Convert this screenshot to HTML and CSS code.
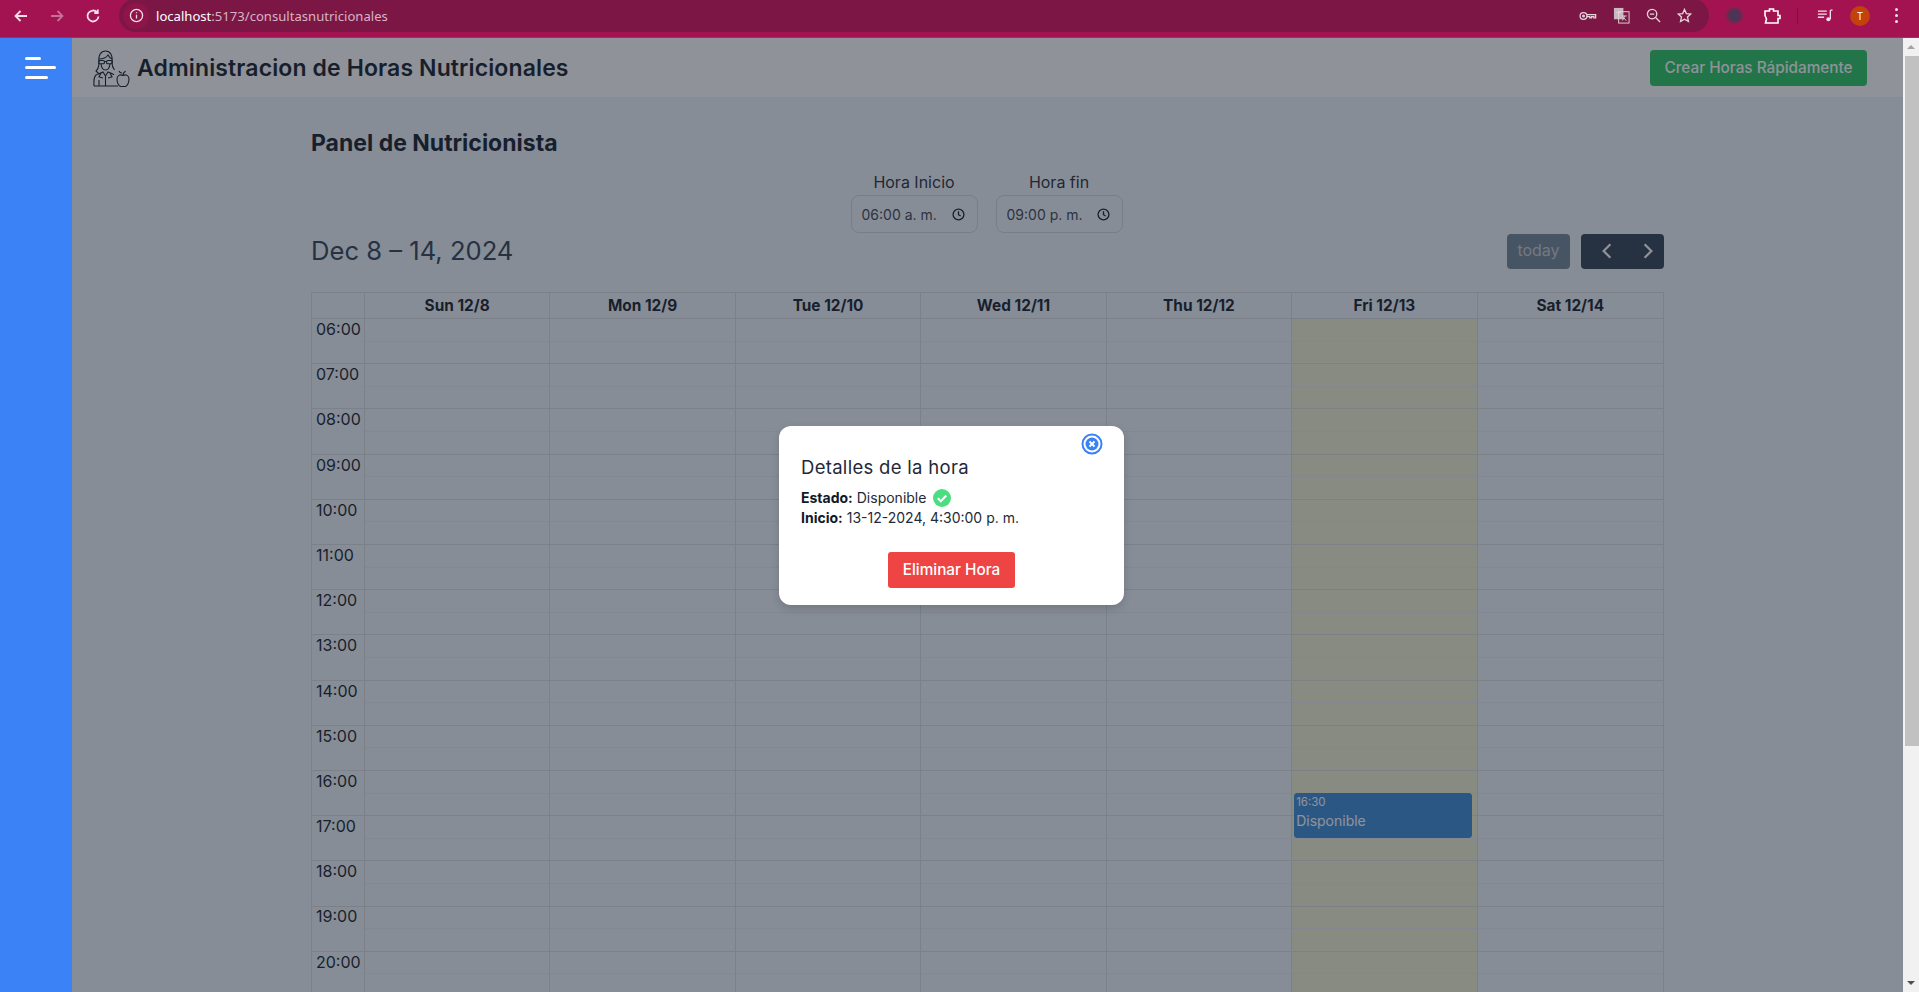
FILE: index.html
```html
<!DOCTYPE html>
<html lang="es">
  <head>
    <meta charset="utf-8" />
    <meta name="viewport" content="width=device-width, initial-scale=1" />
    <title>Administracion de Horas Nutricionales</title>
    <link rel="stylesheet" href="styles.css">
  </head>
  <body>
    <!-- barra del navegador -->
    <div class="browserbar">
      <svg class="navicon" viewBox="0 0 16 16"><path d="M14 8H3M7.5 3L2.5 8l5 5" /></svg>
      <svg class="navicon dim" viewBox="0 0 16 16"><path d="M2 8h11M8.5 3l5 5-5 5" /></svg>
      <svg class="navicon" viewBox="0 0 16 16"><path d="M13.5 8.5A5.5 5.5 0 1 1 12 4.2M12.8 1.5V5H9.300" /></svg>
      <div class="omnibox">
        <span class="infochip">
          <svg viewBox="0 0 16 16"><circle cx="8" cy="8" r="6.5" /><path d="M8 7.2v4M8 4.4v1.300" /></svg>
        </span>
        <span class="url"><b>localhost</b>:5173/consultasnutricionales</span>
        <span class="omniicons">
          <svg class="keyicon" viewBox="0 0 20 14"><circle cx="5" cy="7" r="3.8" /><circle cx="5" cy="7" r="1" /><path d="M8.8 5.5h9.700V9h-2V7.800h-2.500V9h-2V7.800H8.800" /></svg>
          <svg class="transicon" viewBox="0 0 18 18"><rect class="fillgray" x="1" y="1" width="10" height="12" /><rect x="6" y="5" width="11" height="12" /><path d="M3.5 6h5M6 4v2M9.5 9.500h5M12 9.500c0 3-2 4.500-2.500 5M11 11l3 3.500" /></svg>
          <svg viewBox="0 0 16 16"><circle cx="6.5" cy="6.5" r="5" /><path d="M10.2 10.200L15 15M4.2 6.500h4.600" /></svg>
          <svg viewBox="0 0 16 16"><path d="M8 1.5l2 4.400 4.700.5-3.500 3.200 1 4.700L8 11.900l-4.200 2.400 1-4.700L1.300 6.400 6 5.900z" /></svg>
        </span>
      </div>
      <div class="baricons">
        <span class="extdot"></span>
        <svg class="puzzle" viewBox="0 0 18 18"><path d="M2 4h4.500V2h4v2H15v4.500h2v3h-2V16H2.500l1-4-1.500-3.500z" /></svg>
        <span class="barsep"></span>
        <svg class="queue" viewBox="0 0 18 16"><path d="M1 3h10M1 6.500h10M1 10h7M15 2v10M15 2h2.500" /><circle class="fillwhite" cx="12.800" cy="12.300" r="2.300" /></svg>
        <span class="avatar">T</span>
        <span class="kebab"><i></i><i></i><i></i></span>
      </div>
    </div>

    <div class="app">
      <aside class="sidebar">
        <div class="burger"><i class="short"></i><i class="long"></i><i class="mid"></i></div>
      </aside>

      <div class="main">
        <header class="topbar">
          <div class="brand">
            <!-- nutricionista con manzana -->
            <svg class="logo" viewBox="0 0 38 38">
              <path d="M7 14C6 6 9 2 13.5 2S21 6 20 14c0 3 1 5 2.500 7" />
              <path d="M7 14c0 4-1 6-3 8l3 3" />
              <path d="M7 10c3 0 7-1 9-4 1 2 2 3 4 4" />
              <rect x="6.800" y="11.500" width="5.600" height="3.200" rx="1" />
              <rect x="14.600" y="11.500" width="5.600" height="3.200" rx="1" />
              <path d="M12.400 12.500h2.200M9 15c.5 4 2.500 6 4.500 6s4-2 4.500-6" />
              <path d="M2 37c-.5-6 0-9 2-11 2-1 5-2 7-3l2.500 4 2.500-4c2 .6 4 1.400 6 2.800" />
              <path d="M13.500 27v10M2 37h24M7 31v6M9 24l-2 4 4 1M18 24l2 4-4 1" />
              <path d="M25 30c0-3.500 3-5 6-3.500 3-1.500 6 0 6 3.500 0 4-2 7.500-4 7.500h-4c-2 0-4-3.500-4-7.500z" />
              <path d="M31 26.500c0-2 1-3.500 2.500-4.500M30 24c-1.500 0-2.500-.6-3-2" />
            </svg>
            <h1>Administracion de Horas Nutricionales</h1>
          </div>
          <button class="quickbtn">Crear Horas Rápidamente</button>
        </header>

        <section class="panel">
          <h2>Panel de Nutricionista</h2>

          <div class="timefilters">
            <div class="timefield">
              <label>Hora Inicio</label>
              <div class="timeinput">
                <span>06:00 a. m.</span>
                <svg viewBox="0 0 12 12"><circle cx="6" cy="6" r="5" /><path d="M6 3v3.200l2 1.200" /></svg>
              </div>
            </div>
            <div class="timefield">
              <label>Hora fin</label>
              <div class="timeinput">
                <span>09:00 p. m.</span>
                <svg viewBox="0 0 12 12"><circle cx="6" cy="6" r="5" /><path d="M6 3v3.200l2 1.200" /></svg>
              </div>
            </div>
          </div>

          <div class="caltoolbar">
            <div class="caltitle">Dec 8 – 14, 2024</div>
            <div class="calbuttons">
              <button class="todaybtn">today</button>
              <div class="arrows">
                <svg viewBox="0 0 12 16"><path d="M9 2L3 8l6 6" /></svg>
                <svg viewBox="0 0 12 16"><path d="M3 2l6 6-6 6" /></svg>
              </div>
            </div>
          </div>

          <div class="calendar" id="calendar">
            <div class="calhead">
              <div class="axiscell"></div>
              <div class="daycell">Sun 12/8</div>
              <div class="daycell">Mon 12/9</div>
              <div class="daycell">Tue 12/10</div>
              <div class="daycell">Wed 12/11</div>
              <div class="daycell">Thu 12/12</div>
              <div class="daycell">Fri 12/13</div>
              <div class="daycell">Sat 12/14</div>
            </div>
            <div class="calbody">
              <div class="axiscol">
                <div class="hour">06:00</div><div class="hour">07:00</div><div class="hour">08:00</div>
                <div class="hour">09:00</div><div class="hour">10:00</div><div class="hour">11:00</div>
                <div class="hour">12:00</div><div class="hour">13:00</div><div class="hour">14:00</div>
                <div class="hour">15:00</div><div class="hour">16:00</div><div class="hour">17:00</div>
                <div class="hour">18:00</div><div class="hour">19:00</div><div class="hour">20:00</div>
              </div>
              <div class="daycol"></div>
              <div class="daycol"></div>
              <div class="daycol"></div>
              <div class="daycol"></div>
              <div class="daycol"></div>
              <div class="daycol now">
                <div class="event">
                  <div class="eventtime">16:30</div>
                  <div class="eventtitle">Disponible</div>
                </div>
              </div>
              <div class="daycol"></div>
            </div>
          </div>
        </section>

        <div class="overlay">
          <div class="modal">
            <button class="closebtn">
              <svg viewBox="0 0 22 22"><circle class="ring" cx="11" cy="11" r="9.5" /><circle class="disc" cx="11" cy="11" r="6.5" /><path d="M8.5 8.500l5 5M13.5 8.500l-5 5" /></svg>
            </button>
            <h3>Detalles de la hora</h3>
            <p><b>Estado:</b> Disponible
              <svg class="okicon" viewBox="0 0 18 18"><circle cx="9" cy="9" r="9" /><path d="M4.8 9.300l3 3 5.500-5.800" /></svg>
            </p>
            <p><b>Inicio:</b> 13-12-2024, 4:30:00 p. m.</p>
            <button class="deletebtn">Eliminar Hora</button>
          </div>
        </div>
      </div>

      <div class="scrollstrip">
        <span class="scrollup"></span>
        <span class="scrollthumb"></span>
        <span class="scrolldown"></span>
      </div>
    </div>
  </body>
</html>
```

FILE: styles.css
```css
* {
  box-sizing: border-box;
}

html, body {
  height: 100%;
}

body {
  margin: 0;
  overflow: hidden;
  font-family: "Inter", "Liberation Sans", sans-serif;
  background-color: #fff;
  display: flex;
  flex-direction: column;
}

button {
  font-family: inherit;
  border: 0;
}

/* browser bar */
.browserbar {
  height: 38px;
  flex: none;
  background-color: #a31352;
  border-bottom: 1px solid #b3265f;
  display: flex;
  align-items: center;
  padding: 0 0 6px 13px;
  color: #fff;
}

.browserbar svg {
  fill: none;
  stroke: #f3dfe7;
  stroke-width: 1.4;
}

.navicon {
  width: 16px;
  height: 16px;
  margin-right: 20px;
  flex: none;
}

.browserbar .navicon {
  stroke-width: 1.8;
}

.navicon:nth-child(3) {
  margin-right: 18px;
}

.navicon.dim {
  opacity: 0.45;
}

.omnibox {
  width: 1590px;
  height: 33px;
  flex: none;
  background-color: #7c1745;
  border-radius: 17px;
  display: flex;
  align-items: center;
  padding-left: 4px;
}

.infochip {
  width: 26px;
  height: 26px;
  border-radius: 50%;
  background-color: #8f1449;
  display: flex;
  align-items: center;
  justify-content: center;
}

.infochip svg {
  width: 15px;
  height: 15px;
}

.url {
  font-family: "Noto Sans", "Liberation Sans", sans-serif;
  font-size: 13.1px;
  color: #d7b4c4;
  margin-left: 7px;
}

.url b {
  font-weight: 400;
  color: #fff;
}

.omniicons {
  margin-left: auto;
  display: flex;
  align-items: center;
  gap: 16px;
  margin-right: 17px;
}

.omniicons svg {
  width: 15px;
  height: 15px;
  stroke: #e8d3dc;
}

.omniicons .keyicon {
  width: 18px;
  height: 14px;
}

.omniicons .transicon {
  width: 17px;
  height: 17px;
  stroke-width: 1;
}

.browserbar .fillgray {
  fill: #c9b8c0;
  stroke: none;
}

.baricons {
  display: flex;
  align-items: center;
  flex: 1;
}

.extdot {
  width: 17px;
  height: 17px;
  border-radius: 50%;
  background: radial-gradient(#4d3355 35%, #85204f 75%);
  margin-left: 17px;
}

.browserbar .puzzle {
  width: 18px;
  height: 18px;
  margin-left: 20px;
  stroke: #fff;
  stroke-width: 1.6;
}

.barsep {
  width: 1px;
  height: 16px;
  background-color: #73143f;
  margin-left: 16px;
}

.browserbar .queue {
  width: 16px;
  height: 15px;
  margin-left: 19px;
  stroke: #f3dfe7;
  stroke-width: 1.5;
}

.browserbar .fillwhite {
  fill: #f3dfe7;
  stroke: none;
}

.avatar {
  width: 20px;
  height: 20px;
  border-radius: 50%;
  background-color: #c2410c;
  font-size: 10px;
  display: flex;
  align-items: center;
  justify-content: center;
  margin-left: 17px;
}

.kebab {
  display: flex;
  flex-direction: column;
  gap: 3px;
  margin-left: 25px;
}

.kebab i {
  width: 3px;
  height: 3px;
  border-radius: 50%;
  background-color: #f3dfe7;
}

/* app */
.app {
  flex: 1;
  min-height: 0;
  display: flex;
}

.sidebar {
  width: 72px;
  flex: none;
  background-color: #3b82f6;
}

.burger {
  display: flex;
  flex-direction: column;
  gap: 6.5px;
  padding: 18.5px 0 0 25px;
}

.burger i {
  display: block;
  height: 3px;
  border-radius: 2px;
  background-color: #fff;
}

.burger .short {
  width: 16px;
}

.burger .long {
  width: 31px;
}

.burger .mid {
  width: 23px;
}

.main {
  flex: 1;
  min-width: 0;
  overflow: hidden;
  background-color: #eff4fc;
  position: relative;
}

.topbar {
  height: 59px;
  background-color: #fff;
  padding: 0 36px 0 20px;
  display: flex;
  align-items: center;
  justify-content: space-between;
}

.brand {
  display: flex;
  align-items: center;
  gap: 7px;
}

.logo {
  width: 38px;
  height: 38px;
  fill: none;
  stroke: #111827;
  stroke-width: 1.1;
}

.brand h1 {
  margin: 0;
  font-size: 23px;
  font-weight: 600;
  color: #111827;
  letter-spacing: 0.12px;
}

.quickbtn {
  width: 217px;
  height: 36px;
  border-radius: 4px;
  background-color: #22c55e;
  color: #fff;
  font-size: 15.3px;
  font-weight: 500;
}

.panel {
  width: 1353px;
  margin-left: 239px;
  padding-top: 32px;
}

.panel h2 {
  margin: 0;
  font-size: 23px;
  line-height: 28px;
  font-weight: 700;
  color: #111827;
}

.timefilters {
  display: flex;
  justify-content: center;
  gap: 18px;
  margin-top: 14px;
  padding-right: 2px;
}

.timefield {
  display: flex;
  flex-direction: column;
  align-items: center;
}

.timefield label {
  font-size: 16px;
  line-height: 22px;
  margin-bottom: 2px;
  color: #1f2937;
}

.timeinput {
  width: 127px;
  height: 38px;
  border: 1px solid #d1d5db;
  border-radius: 8px;
  display: flex;
  align-items: center;
  justify-content: space-between;
  padding: 0 12px 0 10px;
  font-size: 14px;
  color: #374151;
}

.timeinput svg {
  width: 13px;
  height: 13px;
  fill: none;
  stroke: #111827;
  stroke-width: 1.2;
}

.caltoolbar {
  display: flex;
  justify-content: space-between;
  align-items: center;
  height: 36px;
}

.caltitle {
  font-size: 25.6px;
  font-weight: 400;
  color: #2c3e50;
  padding-bottom: 2px;
}

.calbuttons {
  display: flex;
  gap: 11px;
}

.todaybtn {
  width: 63px;
  height: 35px;
  border-radius: 4px;
  background-color: #6f8296;
  color: #c8ccd2;
  font-size: 16px;
  padding-bottom: 3px;
}

.arrows {
  width: 83px;
  height: 35px;
  border-radius: 4px;
  background-color: #2c3e50;
  display: flex;
  align-items: center;
  gap: 27px;
  padding-left: 19px;
}

.arrows svg {
  width: 14px;
  height: 18px;
  fill: none;
  stroke: #fff;
  stroke-width: 2;
}

.calendar {
  margin-top: 23px;
  border: 1px solid #d6dae0;
  border-bottom: 0;
}

.calhead,
.calbody {
  display: grid;
  grid-template-columns: 53px repeat(7, 1fr);
}

.calhead {
  height: 26px;
  border-bottom: 1px solid #d6dae0;
}

.axiscell,
.daycell {
  border-right: 1px solid #d6dae0;
}

.daycell {
  font-size: 15.4px;
  font-weight: 700;
  line-height: 25px;
  text-align: center;
  color: #111827;
}

.daycell:last-child {
  border-right: 0;
}

/* dos lineas por hora, la de la media hora es mas suave */
.axiscol,
.daycol {
  height: 700px;
  border-right: 1px solid #d6dae0;
  position: relative;
}

.axiscol {
  background-image: repeating-linear-gradient(transparent 0, transparent 44.2px, #d6dae0 44.2px, #d6dae0 45.2px);
}

.daycol {
  background-image: repeating-linear-gradient(transparent 0, transparent 21.6px, #e6e9f0 21.6px, #e6e9f0 22.6px, transparent 22.6px, transparent 44.2px, #d6dae0 44.2px, #d6dae0 45.2px);
}

.daycol:last-child {
  border-right: 0;
}

.daycol.now {
  background-color: #eff1d0;
}

.hour {
  height: 45.2px;
  padding-left: 4px;
  font-size: 16px;
  line-height: 21px;
  color: #111827;
}

.event {
  position: absolute;
  top: 474px;
  left: 2px;
  right: 5px;
  height: 45px;
  border: 1px solid #3788d8;
  border-radius: 3px;
  background-color: #3788d8;
  color: #fff;
  padding: 0 1px;
}

.eventtime {
  font-size: 11.5px;
  line-height: 16px;
}

.eventtitle {
  font-size: 14px;
  line-height: 22px;
}

/* modal */
.overlay {
  position: absolute;
  inset: 0;
  background-color: rgba(31, 38, 50, 0.5);
  display: flex;
  align-items: center;
  justify-content: center;
}

.modal {
  width: 345px;
  height: 179px;
  background-color: #fff;
  border-radius: 12px;
  padding: 29px 22px 0;
  position: relative;
  box-shadow: 0 4px 8px rgba(0, 0, 0, 0.15);
  margin-left: -72px;
}

.closebtn {
  position: absolute;
  top: 7px;
  right: 21px;
  width: 22px;
  height: 22px;
  padding: 0;
  background: none;
}

.closebtn svg {
  display: block;
  width: 22px;
  height: 22px;
}

.closebtn .ring {
  fill: #fff;
  stroke: #3b82f6;
  stroke-width: 2;
}

.closebtn .disc {
  fill: #3b82f6;
}

.closebtn path {
  stroke: #fff;
  stroke-width: 1.8;
  fill: none;
}

.modal h3 {
  margin: 0 0 9px;
  font-size: 18.5px;
  line-height: 24px;
  font-weight: 400;
  letter-spacing: 0.3px;
  color: #1f2937;
}

.modal p {
  margin: 0;
  font-size: 14px;
  line-height: 20px;
  color: #1f2937;
  display: flex;
  align-items: center;
  gap: 4px;
}

.modal p b {
  color: #111827;
  font-weight: 700;
}

.okicon {
  width: 18px;
  height: 18px;
  margin-left: 3px;
}

.okicon circle {
  fill: #4ade80;
}

.okicon path {
  fill: none;
  stroke: #fff;
  stroke-width: 2;
}

.deletebtn {
  display: block;
  width: 127px;
  height: 36px;
  margin: 24px auto 0;
  border-radius: 3px;
  background-color: #ef4444;
  color: #fff;
  font-size: 15.3px;
  font-weight: 500;
}

/* barra de scroll */
.scrollstrip {
  width: 16px;
  flex: none;
  background-color: #f1f1f1;
  display: flex;
  flex-direction: column;
  align-items: center;
}

.scrollup {
  margin-top: 7px;
  border-left: 4px solid transparent;
  border-right: 4px solid transparent;
  border-bottom: 4px solid #a3a3a3;
}

.scrollthumb {
  width: 14px;
  height: 690px;
  margin: 7px 0 0 2px;
  background-color: #c1c1c1;
}

.scrolldown {
  margin-top: auto;
  margin-bottom: 7px;
  border-left: 4px solid transparent;
  border-right: 4px solid transparent;
  border-top: 4px solid #505050;
}
```
